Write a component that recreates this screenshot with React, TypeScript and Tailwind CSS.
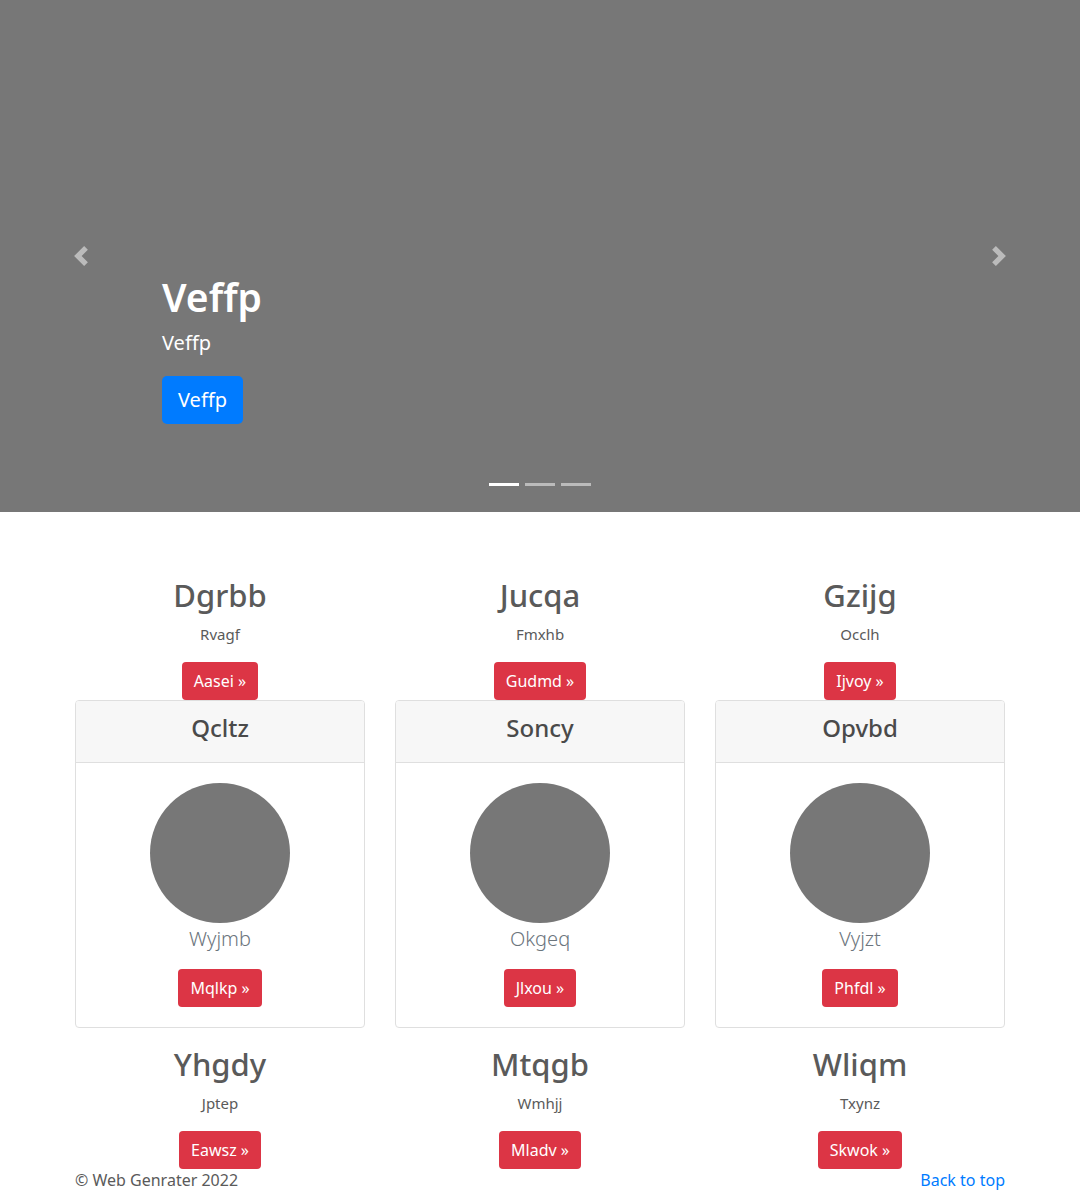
import React from 'react';

const font = { fontFamily: '"Segoe UI", "Noto Sans", "Open Sans", sans-serif' };

interface Feature {
    title: string;
    text: string;
    action: string;
}

interface Card {
    header: string;
    title: string;
    action: string;
}

const topRow: Feature[] = [
    { title: 'Dgrbb', text: 'Rvagf', action: 'Aasei' },
    { title: 'Jucqa', text: 'Fmxhb', action: 'Gudmd' },
    { title: 'Gzijg', text: 'Occlh', action: 'Ijvoy' },
];

const cards: Card[] = [
    { header: 'Qcltz', title: 'Wyjmb', action: 'Mqlkp' },
    { header: 'Soncy', title: 'Okgeq', action: 'Jlxou' },
    { header: 'Opvbd', title: 'Vyjzt', action: 'Phfdl' },
];

const bottomRow: Feature[] = [
    { title: 'Yhgdy', text: 'Jptep', action: 'Eawsz' },
    { title: 'Mtqgb', text: 'Wmhjj', action: 'Mladv' },
    { title: 'Wliqm', text: 'Txynz', action: 'Skwok' },
];

const RedButton: React.FC<{ label: string }> = ({ label }) => (
    <button className="bg-[#dc3545] text-white text-base leading-6 px-3 py-[7px] rounded-[4px]">
        {label} »
    </button>
);

const FeatureCol: React.FC<{ item: Feature }> = ({ item }) => (
    <div className="flex flex-col items-center text-center text-[#5a5a5a]">
        <h2 className="text-[31px] leading-[38px] font-medium">{item.title}</h2>
        <p className="text-[15px] leading-6 mt-2 mb-4">{item.text}</p>
        <RedButton label={item.action} />
    </div>
);

const App: React.FC = () => {
    return (
        <div className="bg-white min-h-[1193px]" style={font}>
            {/* Carousel */}
            <section className="relative h-[512px] bg-[#777777] overflow-hidden">
                <button className="absolute left-0 top-0 h-full w-[15%] flex items-center justify-center opacity-50">
                    <svg width="20" height="20" viewBox="0 0 8 8" fill="#fff">
                        <path d="M5.25 0l-4 4 4 4 1.5-1.5-2.5-2.5 2.5-2.5-1.5-1.5z" />
                    </svg>
                </button>
                <button className="absolute right-0 top-0 h-full w-[15%] flex items-center justify-center opacity-50">
                    <svg width="20" height="20" viewBox="0 0 8 8" fill="#fff">
                        <path d="M2.75 0l-1.5 1.5 2.5 2.5-2.5 2.5 1.5 1.5 4-4-4-4z" />
                    </svg>
                </button>
                <div className="absolute left-[15%] right-[15%] top-[274px] text-white">
                    <h1 className="text-[39px] leading-[46px] font-semibold">Veffp</h1>
                    <p className="text-[20px] leading-[30px] mt-[8px] mb-[18px]">Veffp</p>
                    <button className="bg-[#007bff] text-white text-[20px] leading-[30px] px-4 py-[9px] rounded-[5px]">Veffp</button>
                </div>
                <div className="absolute left-0 right-0 top-[483px] flex justify-center gap-[6px]">
                    <span className="block w-[30px] h-[3px] bg-white" />
                    <span className="block w-[30px] h-[3px] bg-white opacity-50" />
                    <span className="block w-[30px] h-[3px] bg-white opacity-50" />
                </div>
            </section>

            <main className="w-[960px] mx-auto px-[15px] pt-[64px]">
                <div className="grid grid-cols-3 gap-[30px]">
                    {topRow.map((item) => (
                        <FeatureCol key={item.title} item={item} />
                    ))}
                </div>

                <div className="grid grid-cols-3 gap-[30px]">
                    {cards.map((card) => (
                        <div key={card.header} className="border border-[#dfdfdf] rounded-[4px] overflow-hidden">
                            <div className="h-[62px] bg-[#f7f7f7] border-b border-[#dfdfdf] flex items-center justify-center pb-[8px]">
                                <h4 className="text-[24px] leading-[30px] text-[#4a4a4a] font-medium">{card.header}</h4>
                            </div>
                            <div className="flex flex-col items-center pt-[20px] pb-[20px]">
                                <div className="w-[140px] h-[140px] rounded-full bg-[#777777]" />
                                <h5 className="text-[20px] leading-[32px] font-light text-[#6c757d] mb-[14px]">{card.title}</h5>
                                <RedButton label={card.action} />
                            </div>
                        </div>
                    ))}
                </div>

                <div className="grid grid-cols-3 gap-[30px] mt-[17px]">
                    {bottomRow.map((item) => (
                        <FeatureCol key={item.title} item={item} />
                    ))}
                </div>

                <footer className="flex justify-between text-base leading-6 -mt-[1px]">
                    <p className="text-[#5a5a5a]">© Web Genrater 2022</p>
                    <a href="#" className="text-[#007bff]">Back to top</a>
                </footer>
            </main>
        </div>
    );
};

export default App;
